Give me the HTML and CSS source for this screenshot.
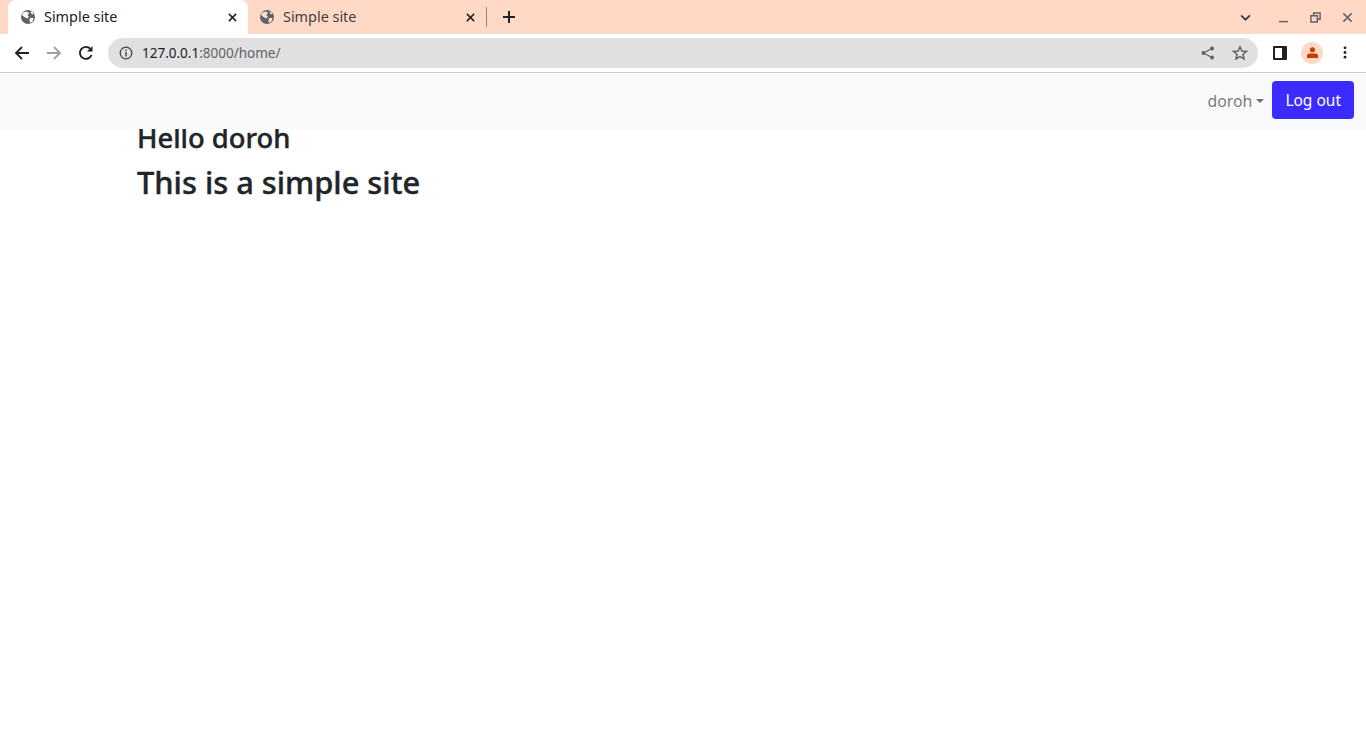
FILE: index.html
```html
<!DOCTYPE html>
<html lang="en">
<head>
<meta charset="utf-8">
<title>Simple site</title>
<link rel="stylesheet" href="styles.css">
</head>
<body>
<div class="tabstrip">
  <div class="tab tab-active">
    <svg class="favicon" viewBox="0 0 16 16"><circle cx="8" cy="8" r="7" fill="#5f6368"/><path d="M3 3.5 L7 2.5 L9 4 L7.5 6 L9 8 L7 9.5 L4.5 8 L2 6 Z M10 9 L13.5 9 L12.5 12.5 L10 14 L9.5 11 Z M10.5 2 L13.5 4 L13 5.5 L11 4.5 Z" fill="#fff"/></svg>
    <span class="tab-title">Simple site</span>
    <svg class="tab-close" viewBox="0 0 10 10"><path d="M1 1 L9 9 M9 1 L1 9" stroke="#202124" stroke-width="1.7"/></svg>
  </div>
  <div class="tab tab-idle">
    <svg class="favicon" viewBox="0 0 16 16"><circle cx="8" cy="8" r="7" fill="#5f6368"/><path d="M3 3.5 L7 2.5 L9 4 L7.5 6 L9 8 L7 9.5 L4.5 8 L2 6 Z M10 9 L13.5 9 L12.5 12.5 L10 14 L9.5 11 Z M10.5 2 L13.5 4 L13 5.5 L11 4.5 Z" fill="#ffdbc8"/></svg>
    <span class="tab-title">Simple site</span>
    <svg class="tab-close" viewBox="0 0 10 10"><path d="M1 1 L9 9 M9 1 L1 9" stroke="#202124" stroke-width="1.7"/></svg>
  </div>
  <div class="tab-sep"></div>
  <svg class="new-tab" viewBox="0 0 12 12"><path d="M6 0 V12 M0 6 H12" stroke="#202124" stroke-width="2"/></svg>
  <div class="strip-spacer"></div>
  <svg class="tab-list" viewBox="0 0 10 6"><path d="M1 1 L5 5 L9 1" fill="none" stroke="#3c4043" stroke-width="1.6"/></svg>
  <svg class="win-btn" viewBox="0 0 12 12"><path d="M1 10.5 H11" stroke="#5f6368" stroke-width="1.6"/></svg>
  <svg class="win-btn" viewBox="0 0 12 12"><path d="M4 4 V1 H11 V8 H8 M1 4 H8 V11 H1 Z" fill="none" stroke="#5f6368" stroke-width="1.6"/></svg>
  <svg class="win-btn" viewBox="0 0 12 12"><path d="M1.5 1.5 L10.5 10.5 M10.5 1.5 L1.5 10.5" stroke="#5f6368" stroke-width="1.6"/></svg>
</div>
<div class="toolbar">
  <svg class="nav-icon" viewBox="0 0 16 16"><path d="M15 8 H2 M8 2 L2 8 L8 14" fill="none" stroke="#202124" stroke-width="1.8"/></svg>
  <svg class="nav-icon" viewBox="0 0 16 16"><path d="M1 8 H14 M8 2 L14 8 L8 14" fill="none" stroke="#9aa0a6" stroke-width="1.8"/></svg>
  <svg class="nav-icon" viewBox="0 0 16 16"><path d="M13.5 10 A6 6 0 1 1 12.4 3.9" fill="none" stroke="#202124" stroke-width="1.9"/><path d="M14.5 1 V6.5 H9 Z" fill="#202124"/></svg>
  <div class="omnibox">
    <svg class="info" viewBox="0 0 14 14"><circle cx="7" cy="7" r="5.8" fill="none" stroke="#444" stroke-width="1.3"/><path d="M7 6 V10.5 M7 3.5 V5" stroke="#444" stroke-width="1.4"/></svg>
    <span class="url"><span class="host">127.0.0.1</span>:8000/home/</span>
    <svg class="omni-share" viewBox="0 0 14 14"><circle cx="11" cy="2.5" r="2" fill="#5f6368"/><circle cx="11" cy="11.5" r="2" fill="#5f6368"/><circle cx="2.5" cy="7" r="2" fill="#5f6368"/><path d="M11 2.5 L2.5 7 L11 11.5" fill="none" stroke="#5f6368" stroke-width="1.2"/></svg>
    <svg class="omni-star" viewBox="0 0 16 16"><path d="M8 1.8 L9.9 6 L14.4 6.4 L11 9.4 L12 13.9 L8 11.5 L4 13.9 L5 9.4 L1.6 6.4 L6.1 6 Z" fill="none" stroke="#5f6368" stroke-width="1.5"/></svg>
  </div>
  <svg class="side-panel" viewBox="0 0 14 14"><rect width="14" height="14" rx="1" fill="#202124"/><rect x="2" y="2" width="7" height="10" fill="#fff"/></svg>
  <div class="avatar"><svg viewBox="0 0 14 12"><circle cx="7" cy="3" r="2.8" fill="#c73d00"/><path d="M1 12 V10 Q1 7.5 4 7.2 H10 Q13 7.5 13 10 V12 Z" fill="#c73d00"/></svg></div>
  <svg class="menu-dots" viewBox="0 0 4 14"><circle cx="2" cy="2" r="1.5" fill="#202124"/><circle cx="2" cy="7" r="1.5" fill="#202124"/><circle cx="2" cy="12" r="1.5" fill="#202124"/></svg>
</div>
<nav class="navbar">
  <a class="nav-user">doroh<span class="caret"></span></a>
  <button class="logout">Log out</button>
</nav>
<main class="content">
  <h2 class="hello">Hello doroh</h2>
  <h1 class="lead">This is a simple site</h1>
</main>
</body>
</html>
```
FILE: styles.css
```css
* { box-sizing: border-box; }
html, body { margin: 0; height: 100%; background: #fff; overflow: hidden; }
body { font-family: "Noto Sans", "Open Sans", sans-serif; color: #212529; }

.tabstrip {
  height: 34px;
  background: #ffd9c6;
  display: flex;
  align-items: center;
  padding-left: 8px;
}
.tab {
  width: 240px;
  height: 34px;
  margin-right: -1px;
  padding: 0 10px 0 12px;
  display: flex;
  align-items: center;
  border-radius: 8px 8px 0 0;
  font-size: 14.4px;
  color: #3c4043;
}
.tab-active { background: #fff; color: #202124; margin-right: 0; }
.tab-idle { padding-left: 11px; padding-right: 12px; }
.favicon { width: 16px; height: 16px; margin-right: 8px; flex: none; }
.tab-title { flex: 1; white-space: nowrap; margin-top: -1px; }
.tab-close { width: 9px; height: 9px; flex: none; margin-right: 1px; }
.tab-sep { width: 1px; height: 20px; background: #8e857f; flex: none; margin-left: -1px; }
.new-tab { width: 12px; height: 12px; margin-left: 16px; flex: none; }
.strip-spacer { flex: 1; }
.tab-list { width: 11px; height: 7px; margin-right: 27px; flex: none; }
.win-btn { width: 11px; height: 11px; margin-right: 21px; flex: none; }
.win-btn:last-child { margin-right: 13px; }

.toolbar {
  height: 39px;
  background: #fff;
  border-bottom: 1px solid #cfcfcf;
  display: flex;
  align-items: center;
  padding: 0 0 1px 14px;
}
.nav-icon { width: 16px; height: 16px; margin-right: 16px; flex: none; }
.omnibox {
  width: 1150px;
  height: 30px;
  margin-left: -2px;
  border-radius: 15px;
  background: #e0e0e0;
  display: flex;
  align-items: center;
  padding: 0 10px 0 11px;
  font-size: 13.5px;
  color: #5f6368;
}
.info { width: 14px; height: 14px; margin-right: 9px; flex: none; }
.url { flex: 1; white-space: nowrap; }
.host { color: #202124; }
.omni-share { width: 14px; height: 14px; margin-right: 17px; flex: none; }
.omni-star { width: 16px; height: 16px; flex: none; }
.side-panel { width: 14px; height: 14px; margin-left: 15px; flex: none; }
.avatar {
  width: 22px;
  height: 22px;
  margin-left: 14px;
  border-radius: 50%;
  background: #ffd9c6;
  display: flex;
  align-items: center;
  justify-content: center;
  flex: none;
}
.avatar svg { width: 13px; height: 11px; }
.menu-dots { width: 4px; height: 13px; margin-left: 20px; flex: none; }

.navbar {
  position: relative;
  z-index: 2;
  height: 56px;
  background: #f8f9fa;
  display: flex;
  align-items: center;
  justify-content: flex-end;
  padding: 0 12px 2px;
}
.nav-user {
  display: flex;
  align-items: center;
  padding-top: 2px;
  font-size: 15.8px;
  color: rgba(0, 0, 0, .55);
  margin-right: 8px;
}
.caret {
  width: 0;
  height: 0;
  margin-left: 4px;
  border-top: 4.8px solid rgba(0, 0, 0, .55);
  border-left: 4.8px solid transparent;
  border-right: 4.8px solid transparent;
}
.logout {
  height: 38px;
  padding: 0 13px;
  border: 0;
  border-radius: 4px;
  background: #3c2bff;
  color: #fff;
  font: inherit;
  font-size: 15.5px;
}

.content { margin-top: -8px; padding-left: 137px; }
.hello, .lead { font-weight: 500; -webkit-text-stroke: .4px #212529; }
.hello { margin: 0; font-size: 27.4px; line-height: 33px; }
.lead { margin: 9px 0 0; font-size: 30.8px; line-height: 39px; }
```
